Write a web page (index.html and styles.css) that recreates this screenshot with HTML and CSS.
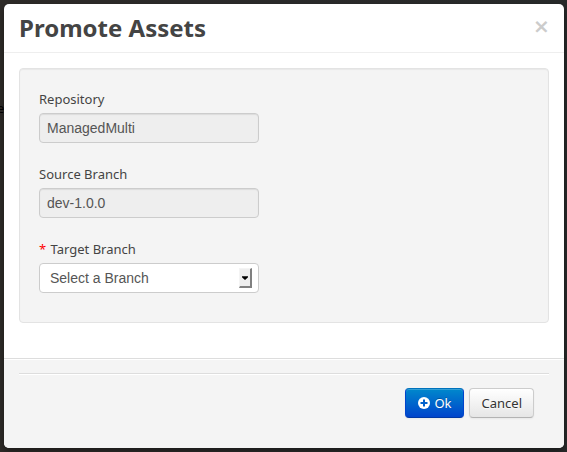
FILE: index.html
```html
<!DOCTYPE html>
<html lang="en">
<head>
<meta charset="utf-8">
<meta name="viewport" content="width=device-width, initial-scale=1">
<title>Promote Assets</title>
<link rel="stylesheet" href="styles.css">
</head>
<body>
<span class="page-text" aria-hidden="true">e</span>
<form class="modal" role="dialog" aria-labelledby="title">
  <header class="modal-header">
    <h1 id="title">Promote Assets</h1>
    <button type="button" class="close" aria-label="Close">×</button>
  </header>
  <div class="modal-body">
    <div class="well">
      <div class="field">
        <label for="repository">Repository</label>
        <input id="repository" type="text" value="ManagedMulti" readonly>
      </div>
      <div class="field">
        <label for="source">Source Branch</label>
        <input id="source" type="text" value="dev-1.0.0" readonly>
      </div>
      <div class="field">
        <label for="target"><span class="required">*</span> Target Branch</label>
        <div class="select">
          <select id="target"><option>Select a Branch</option></select>
          <span class="arrow" aria-hidden="true"><svg width="7" height="4" viewBox="0 0 7 4"><path d="M0 0h7v1L4 4H3L0 1z"/></svg></span>
        </div>
      </div>
    </div>
  </div>
  <footer class="modal-footer">
    <div class="actions">
      <button type="submit" class="btn primary"><svg width="12" height="12" viewBox="0 0 12 12" aria-hidden="true"><circle cx="6" cy="6" r="6" fill="#fff"/><path d="M6 2.5v7M2.5 6h7" stroke="#0060cc" stroke-width="2"/></svg><span>Ok</span></button>
      <button type="button" class="btn">Cancel</button>
    </div>
  </footer>
</form>
</body>
</html>
```
FILE: styles.css
```css
* { box-sizing: border-box; }

body {
  margin: 0;
  padding: 4px 3px 4px 4px;
  background: linear-gradient(90deg, #2e2b28, #2b2b2b 50%, #282a2a);
  color: #444;
  font: 13px/20px "Noto Sans", sans-serif;
}

.page-text {
  position: absolute;
  left: -3px;
  top: 98px;
  color: #000;
}

.modal {
  position: relative;
  overflow: hidden;
  background: #fff;
  border-radius: 5px;
  box-shadow: 0 3px 7px rgba(0, 0, 0, 0.4);
}

.modal-header {
  display: flex;
  justify-content: space-between;
  padding: 9px 15px;
  border-bottom: 1px solid #eee;
}

h1 {
  margin: 0;
  font-size: 24px;
  line-height: 30px;
}

.close {
  width: 16px;
  height: 26px;
  padding: 0;
  border: 0;
  background: none;
  color: #ccc;
  font: bold 20px/26px "DejaVu Sans", sans-serif;
}

.modal-body { padding: 15px; }

.well {
  margin-bottom: 20px;
  padding: 19px 19px 9px;
  border: 1px solid #e3e3e3;
  border-radius: 4px;
  background: #f4f4f4;
  box-shadow: inset 0 1px 1px rgba(0, 0, 0, 0.05);
}

.field {
  width: 220px;
  margin-bottom: 20px;
}

label {
  display: block;
  margin-bottom: 3px;
  line-height: 22px;
}

.required {
  margin-right: 1px;
  color: #f00;
}

input,
select {
  display: block;
  width: 100%;
  height: 30px;
  border: 1px solid #ccc;
  border-radius: 4px;
  color: #555;
  font: 14px/20px "Liberation Sans", sans-serif;
}

input {
  padding: 4px 7px;
  background: #eee;
  box-shadow: inset 0 1px 1px rgba(0, 0, 0, 0.08);
}

select {
  appearance: none;
  padding: 4px 10px;
  background: #fff;
}

.select { position: relative; }

.arrow {
  position: absolute;
  top: 5px;
  right: 7px;
  display: flex;
  align-items: center;
  justify-content: center;
  width: 13px;
  height: 20px;
  border: 1px solid #f4f4f4;
  border-right: 2px solid #808080;
  border-bottom: 2px solid #808080;
  background: #eee;
  pointer-events: none;
}

.arrow svg { width: 6px; }

.modal-footer {
  padding: 14px 15px 30px;
  border-top: 1px solid #ddd;
  background: #f4f4f4;
  box-shadow: inset 0 1px 0 #fff;
}

.actions {
  display: flex;
  justify-content: flex-end;
  gap: 5px;
  padding: 14px 15px 0;
  border-top: 1px solid #ddd;
  box-shadow: inset 0 1px 0 #fff;
}

.btn {
  display: flex;
  align-items: center;
  gap: 4px;
  height: 30px;
  padding: 0 11px 0 12px;
  border: 1px solid #ccc;
  border-bottom-color: #b3b3b3;
  border-radius: 4px;
  background: linear-gradient(#fff, #e6e6e6);
  box-shadow: inset 0 1px 0 rgba(255, 255, 255, 0.2), 0 1px 2px rgba(0, 0, 0, 0.05);
  color: #333;
  font: inherit;
  text-shadow: 0 1px 1px rgba(255, 255, 255, 0.75);
}

.primary {
  border-color: #0072bb #04c #0037a4;
  background: linear-gradient(#08c, #04c);
  color: #fff;
  text-shadow: 0 -1px 0 rgba(0, 0, 0, 0.25);
}
```
